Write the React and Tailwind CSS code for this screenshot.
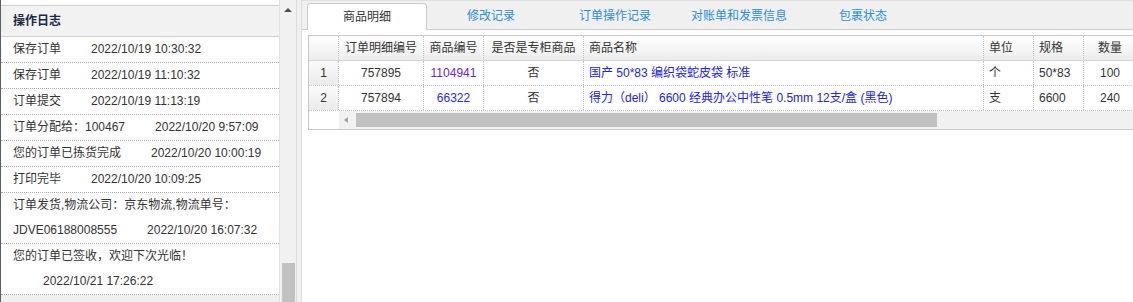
const logs = [
  { text: "保存订单", time: "2022/10/19 10:30:32" },
  { text: "保存订单", time: "2022/10/19 11:10:32" },
  { text: "订单提交", time: "2022/10/19 11:13:19" },
  { text: "订单分配给：100467", time: "2022/10/20 9:57:09" },
  { text: "您的订单已拣货完成", time: "2022/10/20 10:00:19" },
  { text: "打印完毕", time: "2022/10/20 10:09:25" },
  { text: "订单发货,物流公司：京东物流,物流单号：JDVE06188008555", time: "2022/10/20 16:07:32" },
  { text: "您的订单已签收，欢迎下次光临！", time: "2022/10/21 17:26:22" },
];

const tabs = ["商品明细", "修改记录", "订单操作记录", "对账单和发票信息", "包裹状态"];

const rows = [
  { id: "757895", code: "1104941", codeColor: "text-[#6a1fd8]", special: "否", name: "国产 50*83 编织袋蛇皮袋 标准", unit: "个", spec: "50*83", qty: "100" },
  { id: "757894", code: "66322", codeColor: "text-[#2a2ae0]", special: "否", name: "得力（deli） 6600 经典办公中性笔 0.5mm 12支/盒 (黑色)", unit: "支", spec: "6600", qty: "240" },
];

const cell = "shrink-0 border-r border-dotted border-[#c4c4c4] px-[5px] truncate";

export default function App() {
  return (
    <div
      className="flex h-[302px] w-[1133px] overflow-hidden bg-white text-[12px] text-[#333]"
      style={{ fontFamily: '"Liberation Sans", "Noto Sans CJK SC", sans-serif' }}
    >
      {/* 操作日志 */}
      <div className="flex w-[296px] shrink-0 border-l border-[#5a5f66]">
        <div className="flex w-[278px] flex-col pt-[5px]">
          <div className="h-[32px] border-y border-[#cfcfcf] bg-[#f2f2f2] pl-[12px] leading-[30px] font-bold text-[#1b2a48]">
            操作日志
          </div>
          {logs.map((l, i) => (
            <div key={i} className="border-b border-dotted border-[#aaa] pl-[12px] pr-[4px] leading-[25px]">
              {l.text}
              <span className="ml-[30px] inline-block whitespace-nowrap">{l.time}</span>
            </div>
          ))}
          <div className="flex-1 bg-[#f0f0f0]" />
        </div>
        <div className="flex w-[17px] flex-col items-center border-l border-[#e2e2e2] bg-[#f1f1f1]">
          <div className="mt-[8px] h-0 w-0 border-x-[4px] border-b-[4px] border-x-transparent border-b-[#505050]" />
          <div className="mt-auto h-[39px] w-[13px] bg-[#c1c1c1]" />
        </div>
      </div>

      <div className="w-[6px] shrink-0 border-x border-[#dcdcdc] bg-[#f0f0f0]" />

      {/* 右侧 */}
      <div className="flex min-w-0 flex-1 flex-col">
        <div className="flex h-[30px] shrink-0 items-end gap-[4px] border-y border-t-[#e0e0e0] border-b-[#cccccc] bg-[#f0f0f0] pl-[5px]">
          {tabs.map((t, i) =>
            i === 0 ? (
              <div
                key={t}
                className="mb-[-1px] flex h-[27px] w-[120px] items-center justify-center rounded-t-[4px] border border-b-0 border-[#cccccc] bg-white text-[#333]"
              >
                {t}
              </div>
            ) : (
              <div key={t} className="flex h-[26px] w-[120px] items-center justify-center text-[#2b8fd8]">
                {t}
              </div>
            )
          )}
        </div>

        <div className="pl-[6px] pt-[5px]">
          <div className="w-[900px] border border-r-0 border-[#c8c8c8]">
            <div className="flex h-[25px] items-center border-b border-[#d6d6d6] bg-linear-to-b from-white to-[#ececec] leading-[24px]">
              <div className={`${cell} h-full w-[30px]`} />
              <div className={`${cell} w-[85px] text-center`}>订单明细编号</div>
              <div className={`${cell} w-[60px] text-center`}>商品编号</div>
              <div className={`${cell} w-[100px] text-center`}>是否是专柜商品</div>
              <div className={`${cell} w-[400px]`}>商品名称</div>
              <div className={`${cell} w-[50px]`}>单位</div>
              <div className={`${cell} w-[50px]`}>规格</div>
              <div className={`${cell} w-[52px] border-r-0 text-center`}>数量</div>
            </div>
            {rows.map((r, i) => (
              <div key={r.id} className="flex h-[25px] border-b border-dotted border-[#c4c4c4] leading-[24px]">
                <div className={`${cell} w-[30px] bg-linear-to-b from-[#fafafa] to-[#ebebeb] text-center`}>{i + 1}</div>
                <div className={`${cell} w-[85px] text-center`}>{r.id}</div>
                <div className={`${cell} w-[60px] text-center ${r.codeColor}`}>{r.code}</div>
                <div className={`${cell} w-[100px] text-center`}>{r.special}</div>
                <div className={`${cell} w-[400px] text-[#2323d8]`}>{r.name}</div>
                <div className={`${cell} w-[50px]`}>{r.unit}</div>
                <div className={`${cell} w-[50px]`}>{r.spec}</div>
                <div className={`${cell} w-[52px] border-r-0 text-center`}>{r.qty}</div>
              </div>
            ))}
            <div className="flex h-[18px]">
              <div className="w-[30px] shrink-0 bg-white" />
              <div className="flex flex-1 items-center bg-[#f1f1f1] pl-[5px]">
                <div className="h-0 w-0 border-y-[3px] border-r-[4px] border-y-transparent border-r-[#a3a3a3]" />
                <div className="ml-[8px] h-[14px] w-[581px] bg-[#c1c1c1]" />
              </div>
            </div>
          </div>
        </div>
      </div>
    </div>
  );
}
